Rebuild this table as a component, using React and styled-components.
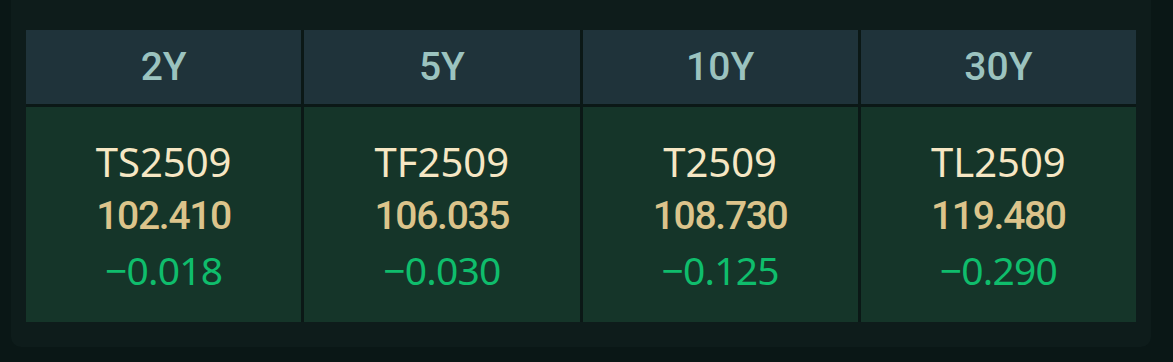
import React from 'react'
import styled, { createGlobalStyle } from 'styled-components'

const GlobalStyles = createGlobalStyle`
  * {
    margin: 0;
    padding: 0;
    box-sizing: border-box;
  }
  body {
    background: #0a1716;
    overflow: hidden;
  }
`

const rows = [
  { tenor: '2Y', code: 'TS2509', price: '102.410', change: '−0.018' },
  { tenor: '5Y', code: 'TF2509', price: '106.035', change: '−0.030' },
  { tenor: '10Y', code: 'T2509', price: '108.730', change: '−0.125' },
  { tenor: '30Y', code: 'TL2509', price: '119.480', change: '−0.290' },
]

const Panel = styled.div`
  width: 1140px;
  margin: -10px 0 0 11px;
  padding: 40px 15px 25px;
  background: #0e1c1b;
  border-radius: 10px;
`

const Grid = styled.div`
  display: grid;
  grid-template-columns: repeat(4, 1fr);
  grid-template-rows: 74px 215px;
  gap: 3px;
  background: #0b1816;
`

const Head = styled.div`
  display: flex;
  align-items: center;
  justify-content: center;
  background: #1f333a;
  color: #9bc3bf;
  font-family: Roboto, "Liberation Sans", sans-serif;
  font-weight: 500;
  font-size: 39px;
`

const Cell = styled.div`
  display: flex;
  flex-direction: column;
  align-items: center;
  justify-content: center;
  background: #153529;
  font-family: "Noto Sans", "Open Sans", sans-serif;
  font-size: 39px;
  line-height: 54px;
  padding-top: 2px;
`

const Code = styled.div`
  color: #f6e7c4;
  font-size: 40px;
`

const Price = styled.div`
  color: #dcc48b;
  font-family: Roboto, "Liberation Sans", sans-serif;
  font-weight: 500;
  letter-spacing: -1.3px;
`

const Change = styled.div`
  color: #0fbd6c;
  letter-spacing: -0.8px;
`

const App = () => (
  <Panel>
    <GlobalStyles />
    <Grid>
      {rows.map(r => (
        <Head key={r.tenor}>{r.tenor}</Head>
      ))}
      {rows.map(r => (
        <Cell key={r.code}>
          <Code>{r.code}</Code>
          <Price>{r.price}</Price>
          <Change>{r.change}</Change>
        </Cell>
      ))}
    </Grid>
  </Panel>
)

export default App
